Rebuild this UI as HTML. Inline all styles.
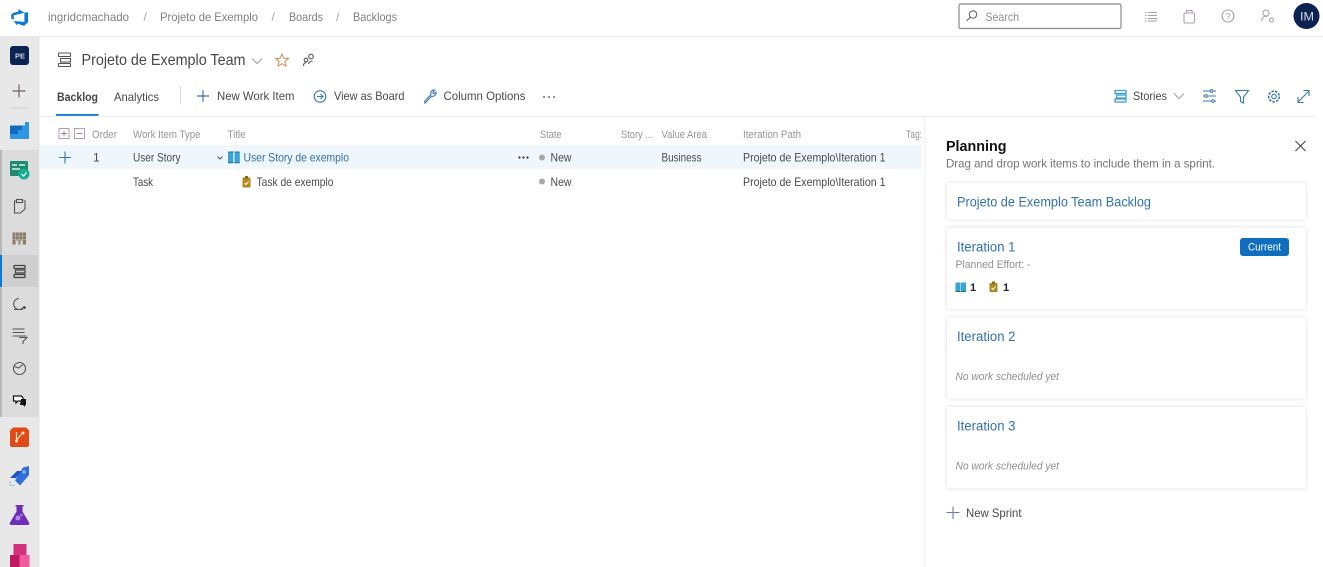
<!DOCTYPE html>
<html><head><meta charset="utf-8"><style>
html,body{margin:0;padding:0;background:#fff;width:1323px;height:567px;overflow:hidden}
svg{display:block}
text{font-family:"Liberation Sans",sans-serif;font-size:12px;fill:#4a4a4a}
.g{fill:#808080}.h{font-size:11px;fill:#959595}.b{fill:#3272ad;font-size:13.5px}
.i{fill:none;stroke:#3a78b5;stroke-width:1.1}.k{fill:none;stroke:#555;stroke-width:1.1}.l{fill:none;stroke:#a3a3a3;stroke-width:1.1}
</style></head><body>
<svg width="1323" height="567" viewBox="0 0 1323 567" xmlns="http://www.w3.org/2000/svg">
<rect width="1323" height="567" fill="#fff"/>
<!-- top bar -->
<rect x="0" y="36" width="1323" height="1" fill="#eaeaea"/>
<path transform="translate(10.2 8) scale(1.05)" d="M17 4v9.74l-4 3.28-6.2-2.26V17L3.29 12.41l10.23.8V4.44zm-3.41.49L7.85 1v2.29L2.23 4.94 1 6.52v3.59l2.41 1V6.95z" fill="#0a78d4"/>
<text x="48" y="21" class="g" textLength="81" lengthAdjust="spacingAndGlyphs">ingridcmachado</text>
<text x="143.500" y="21" style="fill:#a5a5a5">/</text>
<text x="160" y="21" class="g" textLength="98" lengthAdjust="spacingAndGlyphs">Projeto de Exemplo</text>
<text x="271.500" y="21" style="fill:#a5a5a5">/</text>
<text x="289" y="21" class="g" textLength="34" lengthAdjust="spacingAndGlyphs">Boards</text>
<text x="336" y="21" style="fill:#a5a5a5">/</text>
<text x="353" y="21" class="g" textLength="44" lengthAdjust="spacingAndGlyphs">Backlogs</text>
<!-- search -->
<rect x="959" y="4" width="162" height="24.500" rx="1.500" fill="#fff" stroke="#8a8a8a" stroke-width="1.200"/>
<circle cx="973" cy="14.500" r="3.700" class="k" style="stroke:#666"/><path d="M970.300 17.300 L966.500 21" class="k" style="stroke:#666"/>
<text x="985.500" y="21" style="fill:#8f8f8f" textLength="33.500" lengthAdjust="spacingAndGlyphs">Search</text>
<path d="M1148 12.500h9M1148 15.500h9M1148 18.500h9M1148 21h9M1145 12.500h1.500M1145 15.500h1.500M1145 18.500h1.500M1145 21h1.500" class="l"/>
<rect x="1184" y="13" width="10.500" height="10" rx="1" fill="none" stroke="#b09fb8" stroke-width="1.100"/>
<path d="M1186.500 13 V10.500 h5.500 V13" fill="none" stroke="#a89ab0" stroke-width="1.100"/>
<circle cx="1228" cy="16" r="6" class="l"/><text x="1225.500" y="19.500" style="font-size:9.500px;fill:#a3a3a3">?</text>
<circle cx="1266" cy="13" r="3" class="l"/><path d="M1261.500 21 c0.500-4 3-5 6-4.500" class="l"/><circle cx="1271.500" cy="20" r="2" class="l"/>
<circle cx="1306.500" cy="16" r="13" fill="#0b2350"/>
<text x="1300" y="20.500" style="font-size:11.500px;fill:#d8dce6" textLength="14" lengthAdjust="spacingAndGlyphs">IM</text>
<!-- sidebar -->
<rect x="0" y="37" width="39" height="530" fill="#e8e8e8"/>
<rect x="0" y="150" width="39" height="267" fill="#dcdcdc"/>
<rect x="0" y="150" width="2" height="267" fill="#b8b8b8"/>
<rect x="2" y="255" width="36" height="32" fill="#cfcfcf"/>
<rect x="0" y="255" width="2" height="32" fill="#0a78d4"/>
<rect x="38.500" y="37" width="1" height="530" fill="#e0e0e0"/>
<rect x="10" y="46" width="19" height="19" rx="3" fill="#0b2350"/>
<text x="15" y="58.500" style="font-size:7.500px;fill:#c9d0de;font-weight:bold">PE</text>
<path d="M19 84.500V97.500M12.500 91H25.500" stroke="#6b6068" stroke-width="1.200" fill="none"/>
<rect x="10" y="107.500" width="19" height="1" fill="#cfcfcf"/>
<path d="M10 125.500 H29 V139 H10Z" fill="#0f6cbd"/>
<path d="M18 130h4v-4h3v-4h4v17H10v-5h8z" fill="#2f95e4"/>
<rect x="10" y="161" width="18" height="15" rx="1" fill="#1f8a70"/>
<rect x="12" y="164" width="5" height="2" fill="#a8dccb"/><rect x="19" y="164" width="6" height="2" fill="#a8dccb"/><rect x="12" y="168" width="8" height="2" fill="#a8dccb"/>
<circle cx="24" cy="174" r="5.500" fill="#17b08e"/><path d="M21.500 174l2 2 3-3.500" stroke="#fff" stroke-width="1.200" fill="none"/>
<path d="M16 201h-1.500v12h6l4.500-4v-8h-1.500" class="k"/><rect x="16.500" y="199.500" width="6" height="3" class="k"/>
<rect x="12.500" y="232.500" width="13.500" height="12" fill="#8a7a68"/>
<path d="M12.500 236h13.500M12.500 239.500h13.500M15.500 232.500v12M19 232.500v12M22.500 232.500v12" stroke="#c9c2b8" stroke-width=".6"/>
<rect x="16" y="240.500" width="2.200" height="4.500" fill="#dcdcdc"/><rect x="20.500" y="240.500" width="2.200" height="4.500" fill="#dcdcdc"/>
<rect x="14" y="265.500" width="11" height="3" rx=".5" fill="none" stroke="#444" stroke-width="1.300"/>
<rect x="15.500" y="270" width="9.500" height="3" fill="none" stroke="#444" stroke-width="1.300"/>
<rect x="14" y="274.500" width="11" height="3" rx=".5" fill="none" stroke="#444" stroke-width="1.300"/>
<path d="M19 298.500a5.500 5.500 0 1 0 5 8M14 309.500h9" class="k"/><circle cx="24.500" cy="307.500" r="1.300" fill="#333"/>
<path d="M12.500 329h12M12.500 332.500h12M12.500 336h14M19 337.500h8l-4 4v2.500" class="k"/>
<circle cx="19.500" cy="368.500" r="6" class="k"/><path d="M14.500 366.500l4 1.500 4.500-3.500" class="k"/>
<path d="M13.500 396h8l1.500 2v3h-5l-2 2v-2h-2.500z" fill="#fff" stroke="#111" stroke-width="1.200"/><path d="M21 399h5v6h-1v2l-2-2h-3z" fill="#111"/>
<path d="M13 427.500h13l3 3V445a2 2 0 0 1-2 2H12a2 2 0 0 1-2-2V430.500z" fill="#e04a14"/>
<path d="M16.500 432v8M16.500 440l6-7" stroke="#ffd9c5" stroke-width="1.200" fill="none"/><circle cx="16.500" cy="441" r="1.500" fill="#ffe5d6"/><circle cx="23" cy="433" r="1.500" fill="#ffe5d6"/>
<path d="M29 466v9l-9 10.500-5-5 8-13z" fill="#2f6fdc"/><path d="M17 471h5l-6 7h-6z" fill="#1e55c4"/><circle cx="24" cy="472" r="1.800" fill="#8db7ef"/><path d="M10 481v4.500h4.500" stroke="#9ec1ee" fill="none"/>
<path d="M15.500 505h8v1.500h-1v5l6.500 11a1.500 1.500 0 0 1-1 2.500H11a1.500 1.500 0 0 1-1-2.500l6.500-11v-5h-1z" fill="#6f2db5"/><circle cx="18" cy="518" r="2.500" fill="#b78ae0"/><circle cx="21.500" cy="515" r="1.500" fill="#a06fd6"/>
<rect x="13.500" y="544" width="13" height="12" fill="#d4317c"/><rect x="10" y="555" width="9.500" height="12" fill="#bd1860"/><rect x="19.500" y="555" width="10" height="12" fill="#f05a9e"/>
<!-- page title -->
<rect x="58.500" y="53" width="12" height="3.500" rx=".5" class="k"/><rect x="60.500" y="58.500" width="10" height="3.500" class="k"/><rect x="58.500" y="63.500" width="12" height="3" rx=".5" class="k"/>
<text x="81.500" y="65" style="font-size:16px;fill:#484848" textLength="164" lengthAdjust="spacingAndGlyphs">Projeto de Exemplo Team</text>
<path d="M252 58.500l5 5 5-5" class="l"/>
<path d="M282 54l1.800 4.300 4.600.3-3.500 3 1.100 4.500-4-2.400-4 2.400 1.100-4.500-3.500-3 4.600-.3z" fill="none" stroke="#d58a50" stroke-width="1"/>
<circle cx="311" cy="56.500" r="2.300" class="k"/><circle cx="306" cy="60" r="1.800" class="k"/><path d="M303.500 66c0-2 1-3.500 3-3.500M308.500 64c0.500-2 2-3 4-3" class="k"/>
<!-- toolbar -->
<text x="57" y="101" style="font-weight:bold;fill:#444;font-size:12px" textLength="41" lengthAdjust="spacingAndGlyphs">Backlog</text>
<text x="114" y="101" textLength="45" lengthAdjust="spacingAndGlyphs">Analytics</text>
<rect x="56" y="114" width="42.500" height="1.800" fill="#0a78d4"/>
<rect x="180" y="86" width="1" height="19" fill="#dcdcdc"/>
<path d="M203 90v12M197 96h12" stroke="#3a78b5" stroke-width="1.200"/>
<text x="217" y="100" textLength="77.500" lengthAdjust="spacingAndGlyphs">New Work Item</text>
<circle cx="320" cy="96.500" r="5.800" class="i"/><path d="M317 96.500h6M320.500 94l2.500 2.500-2.500 2.500" class="i"/>
<text x="334" y="100" textLength="70.500" lengthAdjust="spacingAndGlyphs">View as Board</text>
<path d="M424.500 101.500l6.500-7c-1-2.500 1-5 3.800-4.500l-2 2.300 1 1.500 2.200-1.800c.5 3-2 5-4.500 4.200l-6.500 7z" class="i"/>
<text x="443.500" y="100" textLength="82" lengthAdjust="spacingAndGlyphs">Column Options</text>
<circle cx="544" cy="97" r=".9" fill="#444"/><circle cx="549" cy="97" r=".9" fill="#444"/><circle cx="554" cy="97" r=".9" fill="#444"/>
<rect x="1115" y="90.500" width="11" height="3" style="fill:none;stroke:#3f9fd0;stroke-width:1.300"/><rect x="1116.500" y="95" width="9.500" height="3" style="fill:none;stroke:#3f9fd0;stroke-width:1.300"/><rect x="1115" y="99" width="11" height="3" style="fill:none;stroke:#3f9fd0;stroke-width:1.300"/>
<text x="1133" y="100" textLength="34" lengthAdjust="spacingAndGlyphs">Stories</text>
<path d="M1174 93.500l5 5 5-5" class="l"/>
<path d="M1203 91h13M1203 96h13M1203 101h13" class="i"/><circle cx="1211.500" cy="91" r="1.400" fill="#fff" stroke="#3a78b5"/><circle cx="1206" cy="96" r="1.400" fill="#fff" stroke="#3a78b5"/><circle cx="1213" cy="101" r="1.400" fill="#fff" stroke="#3a78b5"/>
<path d="M1235.500 90.500h13l-5 6.500v6l-3-1.500v-4.500z" class="i"/>
<circle cx="1274" cy="96.500" r="2.300" class="i"/><circle cx="1274" cy="96.500" r="5.300" fill="none" stroke="#3a78b5" stroke-width="1.600" stroke-dasharray="2.500 1.200"/>
<path d="M1298 102l11-11M1303.500 90.500h5.500v5.500M1298 97v5.500h5.500" class="i"/>
<rect x="40" y="116" width="885" height="1" fill="#eeeeee"/>
<rect x="925" y="116" width="391" height="1" fill="#eeeeee"/>
<!-- table header -->
<rect x="59" y="128.500" width="10" height="10" fill="none" stroke="#b79abf"/><path d="M61 133.500h6M64 130.500v6" stroke="#887" stroke-width=".9"/>
<rect x="74.500" y="128.500" width="10" height="10" fill="none" stroke="#b79abf"/><path d="M76.500 133.500h6" stroke="#887" stroke-width=".9"/>
<text x="92" y="138" class="h" textLength="25" lengthAdjust="spacingAndGlyphs">Order</text>
<text x="133" y="138" class="h" textLength="67.500" lengthAdjust="spacingAndGlyphs">Work Item Type</text>
<text x="227.500" y="138" class="h" textLength="18" lengthAdjust="spacingAndGlyphs">Title</text>
<text x="540" y="138" class="h" textLength="21.500" lengthAdjust="spacingAndGlyphs">State</text>
<text x="621" y="138" class="h" textLength="32" lengthAdjust="spacingAndGlyphs">Story ...</text>
<text x="661.500" y="138" class="h" textLength="45.500" lengthAdjust="spacingAndGlyphs">Value Area</text>
<text x="743" y="138" class="h" textLength="58" lengthAdjust="spacingAndGlyphs">Iteration Path</text>
<text x="906" y="138" class="h" textLength="16" lengthAdjust="spacingAndGlyphs">Tag:</text>
<!-- rows -->
<rect x="40" y="145" width="882" height="24" fill="#eff6fc"/>
<path d="M65 151.500v12M59 157.500h12" stroke="#3a78b5" stroke-width="1.100"/>
<text x="93" y="161.500">1</text>
<text x="133" y="161.500" textLength="47.500" lengthAdjust="spacingAndGlyphs">User Story</text>
<path d="M217.500 156.500l2.500 2.500 2.500-2.500" stroke="#555" stroke-width="1" fill="none"/>
<path d="M228 152h5.300v10.500h-5.300z M234.500 152h5.300v10.500h-5.300z" fill="#3aa4d2"/>
<path d="M228 162.800h5.500M234.300 162.800h5.500M228.500 152h5M234.500 152h5" stroke="#15719f" stroke-width="1"/>
<text x="243.500" y="161.500" textLength="105.500" lengthAdjust="spacingAndGlyphs" style="fill:#3272ad">User Story de exemplo</text>
<circle cx="519.500" cy="157.500" r="1.100" fill="#333"/><circle cx="523.500" cy="157.500" r="1.100" fill="#333"/><circle cx="527.500" cy="157.500" r="1.100" fill="#333"/>
<circle cx="542" cy="157.500" r="3" fill="#a8a8a8"/>
<text x="550.500" y="161.500" textLength="21" lengthAdjust="spacingAndGlyphs">New</text>
<text x="661.500" y="161.500" textLength="40" lengthAdjust="spacingAndGlyphs">Business</text>
<text x="743" y="161.500" textLength="142.500" lengthAdjust="spacingAndGlyphs">Projeto de Exemplo\Iteration 1</text>
<text x="133" y="186" textLength="20" lengthAdjust="spacingAndGlyphs">Task</text>
<rect x="242.500" y="177.500" width="8" height="10" rx=".7" fill="#b08a1e"/><rect x="245" y="176" width="3" height="2.500" fill="#8a6c14"/><path d="M244.500 183l1.500 1.500 2.500-3" stroke="#fff" stroke-width="1" fill="none"/>
<text x="256.500" y="186" textLength="77" lengthAdjust="spacingAndGlyphs">Task de exemplo</text>
<circle cx="542" cy="181.500" r="3" fill="#a8a8a8"/>
<text x="550.500" y="186" textLength="21" lengthAdjust="spacingAndGlyphs">New</text>
<text x="743" y="186" textLength="142.500" lengthAdjust="spacingAndGlyphs">Projeto de Exemplo\Iteration 1</text>
<!-- planning panel -->
<rect x="924.500" y="117" width="1" height="450" fill="#ececec"/>
<text x="946" y="151" style="font-weight:bold;font-size:14.500px;fill:#111" textLength="60.500" lengthAdjust="spacingAndGlyphs">Planning</text>
<text x="946" y="167.500" style="font-size:12px;fill:#757575" textLength="269" lengthAdjust="spacingAndGlyphs">Drag and drop work items to include them in a sprint.</text>
<path d="M1295.500 141l10 10M1305.500 141l-10 10" stroke="#444" stroke-width="1.100"/>
<g fill="#fff" style="filter:drop-shadow(0 0 2px rgba(0,0,0,.14))">
<rect x="947" y="183" width="358.500" height="36.500"/>
<rect x="947" y="228" width="358.500" height="81"/>
<rect x="947" y="317.500" width="358.500" height="81"/>
<rect x="947" y="407" width="358.500" height="81"/>
</g>
<text x="957" y="206.500" class="b" textLength="194" lengthAdjust="spacingAndGlyphs">Projeto de Exemplo Team Backlog</text>
<text x="957" y="251.500" class="b" textLength="58.500" lengthAdjust="spacingAndGlyphs">Iteration 1</text>
<text x="955.500" y="268" style="font-size:11px;fill:#909090" textLength="75" lengthAdjust="spacingAndGlyphs">Planned Effort: -</text>
<rect x="1240" y="238" width="49" height="18" rx="3" fill="#106ebe"/>
<text x="1248" y="250.500" style="font-size:11px;fill:#fff" textLength="33" lengthAdjust="spacingAndGlyphs">Current</text>
<path d="M955.500 282.500h5v9h-5z M961 282.500h5v9h-5z" fill="#3aa4d2"/>
<path d="M955.500 291.500h5M961 291.500h5" stroke="#15719f" stroke-width="1"/>
<text x="970" y="291" style="font-weight:bold;font-size:11px;fill:#222">1</text>
<rect x="989.500" y="283" width="8" height="9" rx=".7" fill="#b08a1e"/><rect x="992" y="281.500" width="3" height="2.500" fill="#8a6c14"/><path d="M991.500 288l1.500 1.500 2.500-3" stroke="#fff" stroke-width="1" fill="none"/>
<text x="1003" y="291" style="font-weight:bold;font-size:11px;fill:#222">1</text>
<text x="957" y="341" class="b" textLength="58.500" lengthAdjust="spacingAndGlyphs">Iteration 2</text>
<text x="955.500" y="380" style="font-size:11px;font-style:italic;fill:#909090" textLength="103.500" lengthAdjust="spacingAndGlyphs">No work scheduled yet</text>
<text x="957" y="430.500" class="b" textLength="58.500" lengthAdjust="spacingAndGlyphs">Iteration 3</text>
<text x="955.500" y="469.500" style="font-size:11px;font-style:italic;fill:#909090" textLength="103.500" lengthAdjust="spacingAndGlyphs">No work scheduled yet</text>
<path d="M953 506.500v12.500M946.500 512.500h13" stroke="#6a7cb8" stroke-width="1.100"/>
<text x="966" y="517" textLength="55.500" lengthAdjust="spacingAndGlyphs">New Sprint</text>
</svg>
</body></html>
